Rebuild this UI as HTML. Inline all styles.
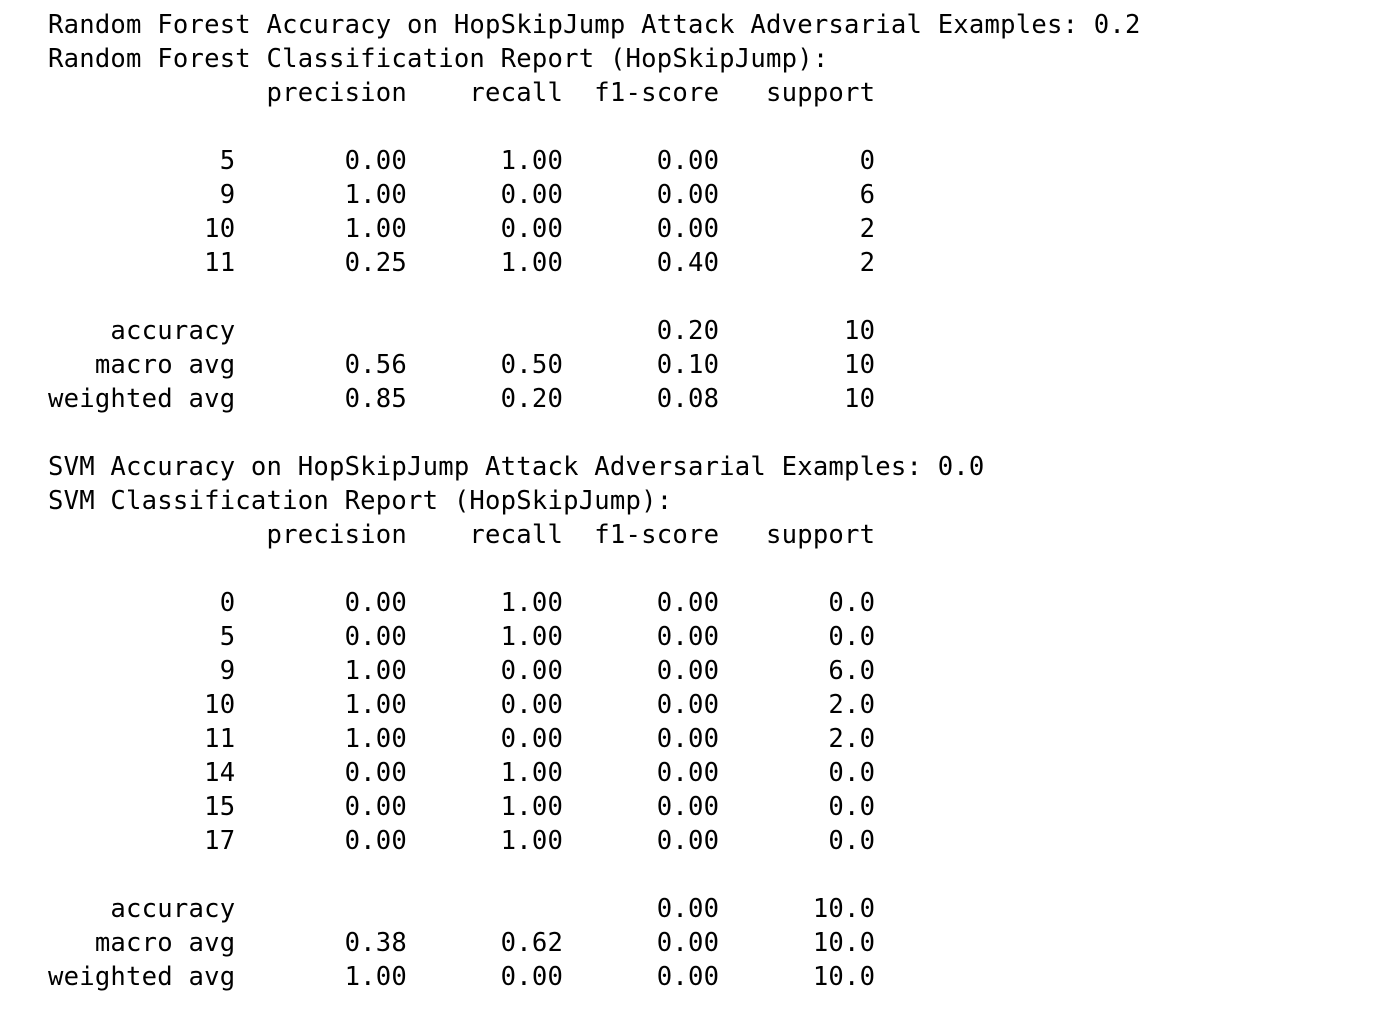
<!DOCTYPE html>
<html><head><meta charset="utf-8"><style>
html,body{margin:0;padding:0;background:#fff;width:1400px;height:1014px;overflow:hidden}
pre{margin:0;position:absolute;left:48px;top:8px;font-family:"DejaVu Sans Mono","Liberation Mono",monospace;font-size:25.6px;letter-spacing:0.2px;line-height:34px;color:#000}
</style></head><body><pre>Random Forest Accuracy on HopSkipJump Attack Adversarial Examples: 0.2
Random Forest Classification Report (HopSkipJump):
              precision    recall  f1-score   support

           5       0.00      1.00      0.00         0
           9       1.00      0.00      0.00         6
          10       1.00      0.00      0.00         2
          11       0.25      1.00      0.40         2

    accuracy                           0.20        10
   macro avg       0.56      0.50      0.10        10
weighted avg       0.85      0.20      0.08        10

SVM Accuracy on HopSkipJump Attack Adversarial Examples: 0.0
SVM Classification Report (HopSkipJump):
              precision    recall  f1-score   support

           0       0.00      1.00      0.00       0.0
           5       0.00      1.00      0.00       0.0
           9       1.00      0.00      0.00       6.0
          10       1.00      0.00      0.00       2.0
          11       1.00      0.00      0.00       2.0
          14       0.00      1.00      0.00       0.0
          15       0.00      1.00      0.00       0.0
          17       0.00      1.00      0.00       0.0

    accuracy                           0.00      10.0
   macro avg       0.38      0.62      0.00      10.0
weighted avg       1.00      0.00      0.00      10.0
</pre></body></html>
